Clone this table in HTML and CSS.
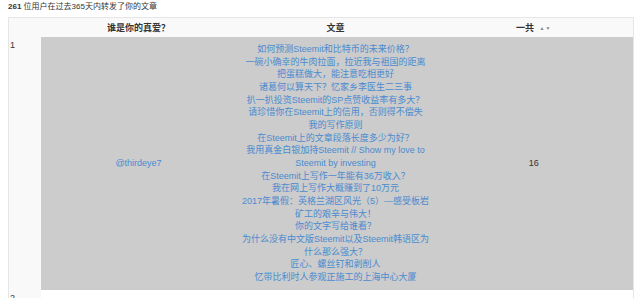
FILE: index.html
```html
<!DOCTYPE html>
<html lang="zh">
<head>
<meta charset="utf-8">
<title>转发统计</title>
<link rel="stylesheet" href="styles.css">
</head>
<body>
<p class="summary"><b>261</b> 位用户在过去365天内转发了你的文章</p>
<table class="ranking">
  <colgroup>
    <col class="c-rank">
    <col class="c-user">
    <col class="c-posts">
    <col class="c-total">
  </colgroup>
  <thead>
    <tr>
      <th></th>
      <th>谁是你的真爱？</th>
      <th>文章</th>
      <th>一共 <span class="sort">▲▼</span></th>
    </tr>
  </thead>
  <tbody>
    <tr class="hl">
      <td class="rank">1</td>
      <td class="user"><a href="#">@thirdeye7</a></td>
      <td class="posts">
        <a href="#">如何预测Steemit和比特币的未来价格？</a>
        <a href="#">一碗小确幸的牛肉拉面，拉近我与祖国的距离</a>
        <a href="#">把蛋糕做大，能注意吃相更好</a>
        <a href="#">诸葛何以算天下？忆家乡李医生二三事</a>
        <a href="#">扒一扒投资Steemit的SP点赞收益率有多大？</a>
        <a href="#">请珍惜你在Steemit上的信用，否则得不偿失</a>
        <a href="#">我的写作原则</a>
        <a href="#">在Steemit上的文章段落长度多少为好？</a>
        <a href="#">我用真金白银加持Steemit // Show my love to Steemit by investing</a>
        <a href="#">在Steemit上写作一年能有36万收入？</a>
        <a href="#">我在网上写作大概赚到了10万元</a>
        <a href="#">2017年暑假：英格兰湖区风光（5）—感受板岩矿工的艰辛与伟大！</a>
        <a href="#">你的文字写给谁看？</a>
        <a href="#">为什么没有中文版Steemit以及Steemit韩语区为什么那么强大？</a>
        <a href="#">匠心、螺丝钉和剥削人</a>
        <a href="#">忆带比利时人参观正施工的上海中心大厦</a>
      </td>
      <td class="total">16</td>
    </tr>
    <tr>
      <td class="rank">2</td>
      <td class="user"></td>
      <td class="posts"></td>
      <td class="total"></td>
    </tr>
  </tbody>
</table>
</body>
</html>
```

FILE: styles.css
```css
html, body {
  margin: 0;
  padding: 0;
  background: #ffffff;
}
body {
  padding: 0 7px 0 8px;
  font-family: "Liberation Sans", "Noto Sans CJK JP", sans-serif;
  font-size: 9px;
  color: #333333;
}
.summary {
  margin: 0;
  height: 17px;
  line-height: 14px;
  font-size: 8px;
}
.summary b {
  font-weight: bold;
}
.ranking {
  width: 625px;
  border-collapse: collapse;
  table-layout: fixed;
  border: 1px solid #e6e6e6;
}
.c-rank { width: 32px; }
.c-user { width: 196px; }
.c-posts { width: 198px; }
.c-total { width: 199px; }
.ranking th {
  height: 19px;
  padding: 0;
  background: #f9f9f9;
  font-weight: bold;
  text-align: center;
  vertical-align: middle;
  line-height: 12px;
}
.sort {
  font-size: 5px;
  color: #888888;
  margin-left: 3px;
  letter-spacing: 1px;
  vertical-align: 1px;
}
.ranking td {
  padding: 6px 5px;
  line-height: 12.67px;
  text-align: center;
  vertical-align: middle;
}
.ranking td.rank {
  background: #f9f9f9;
  text-align: left;
  vertical-align: top;
  padding: 2px 1px;
}
.hl td.user, .hl td.posts, .hl td.total {
  background: #cccccc;
}
.ranking a {
  color: #4a8bd0;
  text-decoration: none;
}
.posts a {
  display: block;
}
.total {
  color: #333333;
}
```
